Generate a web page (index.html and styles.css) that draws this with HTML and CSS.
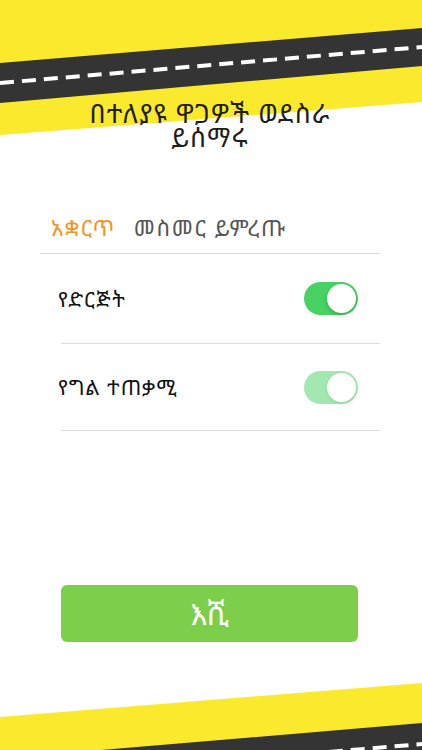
FILE: index.html
```html
<!DOCTYPE html>
<html lang="am">

<head>
    <meta charset="UTF-8">
    <meta name="viewport" content="width=device-width, initial-scale=1.0">
    <title>መስመር ይምረጡ</title>
    <link rel="stylesheet" href="styles.css">
</head>

<body>
    <div class="screen">
        <!-- road stripe, top -->
        <svg class="road road-top" width="422" height="140" viewBox="0 0 422 140">
            <polygon points="0,0 422,0 422,102 0,135" fill="#fbe92d" />
            <polygon points="0,63 422,28 422,66 0,103" fill="#343434" />
            <line x1="0" y1="83" x2="422" y2="47" stroke="#fff" stroke-width="4" stroke-dasharray="14 8" />
        </svg>

        <!-- road stripe, bottom -->
        <svg class="road road-bottom" width="422" height="80" viewBox="0 670 422 80">
            <polygon points="0,717 422,683 422,750 0,750" fill="#fbe92d" />
            <polygon points="0,758.5 422,723 422,790 0,790" fill="#343434" />
            <line x1="0" y1="780" x2="422" y2="744" stroke="#fff" stroke-width="4" stroke-dasharray="14 8" />
        </svg>

        <div class="content">
            <h1 class="title">በተለያዩ ዋጋዎች ወደስራ ይሰማሩ</h1>

            <div class="tabs">
                <span class="tab tab-active">አቋርጥ</span>
                <span class="tab">መስመር ይምረጡ</span>
            </div>

            <ul class="options">
                <li class="option">
                    <span class="option-label">የድርጅት</span>
                    <span class="switch"></span>
                </li>
                <li class="option">
                    <span class="option-label">የግል ተጠቃሚ</span>
                    <span class="switch switch-dim"></span>
                </li>
            </ul>

            <button class="ok-btn">እሺ</button>
        </div>
    </div>
</body>

</html>
```

FILE: styles.css
```css
body {
    margin: 0;
    padding: 0;
    background: #fff;
    font-family: "Noto Sans Ethiopic", "Abyssinica SIL", "Noto Sans", "DejaVu Sans", sans-serif;
}

.screen {
    position: relative;
    width: 422px;
    height: 750px;
    overflow: hidden;
    background: #fff;
}

.road {
    position: absolute;
    left: 0;
    display: block;
}

.road-top {
    top: 0;
}

.road-bottom {
    bottom: 0;
}

.content {
    position: relative;
    display: flex;
    flex-direction: column;
    padding: 0 42px 0 40px;
}

.title {
    margin: 101px auto 0;
    width: 290px;
    font-size: 26px;
    font-weight: normal;
    letter-spacing: 1.2px;
    line-height: 24px;
    text-align: center;
    color: #1e1e1e;
}

.tabs {
    display: flex;
    gap: 18px;
    margin-top: 64px;
    padding: 0 0 12px 11px;
    border-bottom: 1px solid #dcdcdc;
    font-size: 22px;
    letter-spacing: 1.6px;
    line-height: 28px;
    color: #555;
}

.tab-active {
    color: #f39323;
}

.options {
    list-style: none;
    margin: 0 0 0 21px;
    padding: 0;
}

.option {
    display: flex;
    align-items: center;
    justify-content: space-between;
    height: 89px;
    padding-right: 22px;
    border-bottom: 1px solid #dcdcdc;
    font-size: 21px;
    letter-spacing: 1px;
    color: #111;
}

.option + .option {
    height: 86px;
}

.option-label {
    margin-left: -3px;
}

.switch {
    position: relative;
    width: 54px;
    height: 33px;
    border-radius: 17px;
    background: #47d264;
}

.switch::after {
    content: "";
    position: absolute;
    top: 2px;
    right: 2px;
    width: 29px;
    height: 29px;
    border-radius: 50%;
    background: #fff;
    box-shadow: 0 2px 4px rgba(0, 0, 0, 0.2);
}

.switch-dim {
    opacity: 0.5;
}

.ok-btn {
    margin: 154px 22px 0 21px;
    height: 57px;
    border: none;
    border-radius: 6px;
    background: #7dce4a;
    color: #fff;
    font-family: inherit;
    font-size: 30px;
    cursor: pointer;
}
```
